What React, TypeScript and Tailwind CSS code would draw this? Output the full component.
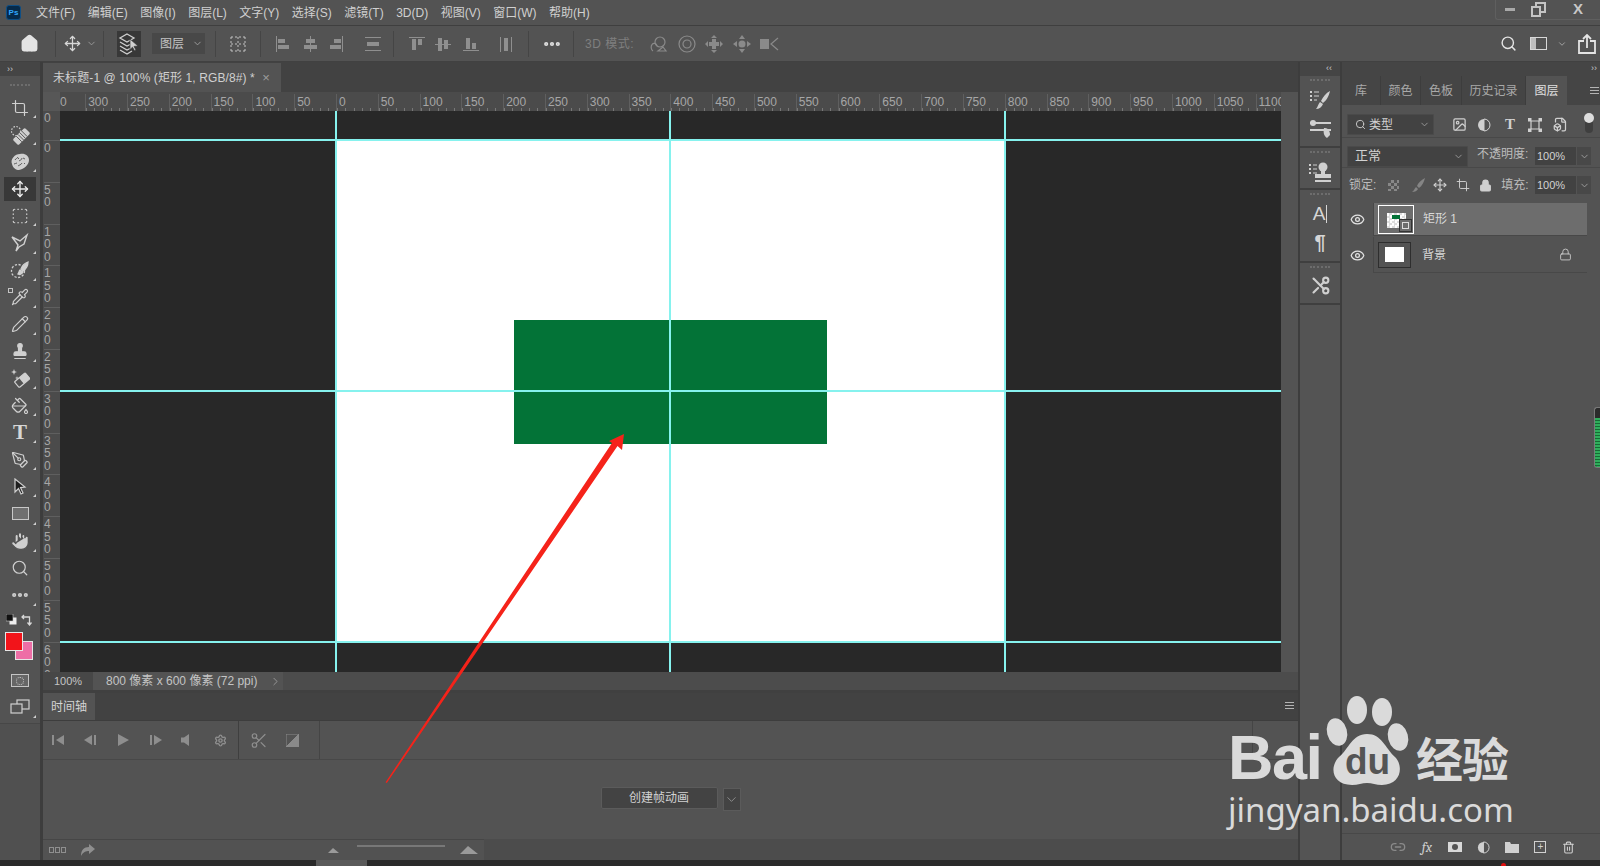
import type { ReactNode } from "react";
import {
  ChevronDown,
  ChevronRight,
  Crop,
  Ellipsis,
  Eye,
  FileBox,
  Hand,
  House,
  Image,
  Link2,
  Lock,
  Move,
  PaintBucket,
  Pencil,
  PenTool,
  Pipette,
  Scissors,
  Search,
  Settings,
  SquareDashed,
  Stamp,
  Trash2,
} from "lucide-react";

const menus = ["文件(F)", "编辑(E)", "图像(I)", "图层(L)", "文字(Y)", "选择(S)", "滤镜(T)", "3D(D)", "视图(V)", "窗口(W)", "帮助(H)"];
const rulerTop = ["300", "250", "200", "150", "100", "50", "0", "50", "100", "150", "200", "250", "300", "350", "400", "450", "500", "550", "600", "650", "700", "750", "800", "850", "900", "950", "1000", "1050", "1100"];
const rulerSide = ["0", "50", "100", "150", "200", "250", "300", "350", "400", "450", "500", "550", "600"];

const ink = "#d0d0d0";

function Sep({ left }: { left: string }) {
  return <div className={`h-[26px] w-px bg-[#454545] ${left}`} />;
}

function Slot({ className, children }: { className: string; children?: ReactNode }) {
  return <div className={`flex shrink-0 items-center justify-center ${className}`}>{children}</div>;
}

// blocks for the align buttons: bars = x,y,w,h
function Bars({ bars, size = 20 }: { bars: number[][]; size?: number }) {
  return (
    <svg width={size} height={size} viewBox="0 0 20 20" fill="#8f8f8f">
      {bars.map((b, i) => (
        <rect key={i} x={b[0]} y={b[1]} width={b[2]} height={b[3]} />
      ))}
    </svg>
  );
}

function LayersIcon() {
  return (
    <svg width="22" height="24" viewBox="0 0 22 24" fill="none" stroke={ink} strokeWidth="1.3">
      <path d="M9 2l7 4-7 4-7-4z" />
      <path d="M2 10l7 4 4-2M2 14l7 4 4-2M2 18l7 4 5-3" />
      <path d="M12 7l8 7-4 .4 2 3.6-1.500.8-2-3.600-2.500 2.400z" fill={ink} stroke="#383838" strokeWidth=".7" />
    </svg>
  );
}

function GridIcon() {
  return (
    <svg width="20" height="20" viewBox="0 0 20 20" stroke="#c4c4c4" fill="#c4c4c4" strokeDasharray="2 2">
      <path d="M3 3h14M3 10h14M3 17h14M3 3v14M10 3v14M17 3v14" fill="none" strokeWidth="1" />
    </svg>
  );
}

function HealIcon() {
  return (
    <svg width="20" height="20" viewBox="0 0 20 20" fill="none">
      <circle cx="6" cy="6" r="4.500" stroke={ink} strokeWidth="1.100" strokeDasharray="1.600 1.400" />
      <g transform="rotate(-45 11.500 11.500)">
        <rect x="3" y="7.500" width="17" height="8" rx="1.500" fill={ink} />
        <path d="M8 7.500v8M10.500 7.500v8M13 7.500v8M15.500 7.500v8" stroke="#535353" strokeWidth=".9" />
      </g>
    </svg>
  );
}

function SpongeIcon() {
  return (
    <svg width="20" height="20" viewBox="0 0 20 20" fill="none">
      <path d="M2 12c-2-5 3-10 8-10 5-1 9 2 9 6 0 5-5 9-10 10-3 0-6-2-7-6z" fill={ink} />
      <path d="M5 8c1-2 2-1 3-3M9 9c1-1 3-1 3-3M13 6l2 1M4 12c1 0 2-1 3-1M8 14c1-1 3-1 4-3M14 11l1 1M8 6l1 1" stroke="#535353" strokeWidth=".9" />
    </svg>
  );
}

function LassoIcon() {
  return (
    <svg width="20" height="20" viewBox="0 0 20 20" fill="none" stroke={ink} strokeWidth="1.4">
      <path d="M2 4l8 4 7-6-3 9-5 3-3 4 2-6z" />
    </svg>
  );
}

function BrushSelectIcon() {
  return (
    <svg width="20" height="20" viewBox="0 0 20 20" fill="none" stroke={ink} strokeWidth="1.3">
      <circle cx="8" cy="11" r="6.500" strokeDasharray="2.200 1.600" />
      <path d="M18 2c-3 1-6 4-7 7l2 2c3-2 5-5 5-9z" fill={ink} />
      <path d="M10 10l3 2c-1 2-3 3-5 2 1-1 1-3 2-4z" fill={ink} />
    </svg>
  );
}

function EraserIcon() {
  return (
    <svg width="20" height="20" viewBox="0 0 20 20" fill={ink}>
      <g transform="rotate(-40 12 12)">
        <rect x="5" y="8.500" width="14" height="7.500" rx="1" fill="none" stroke={ink} strokeWidth="1.200" />
        <rect x="11" y="8.500" width="8" height="7.500" rx="1" />
      </g>
      <path d="M4 1l.8 2.200L7 4l-2.200.8L4 7l-.8-2.200L1 4l2.200-.8zM7 8l.5 1.500L9 10l-1.500.5L7 12l-.5-1.500L5 10l1.500-.5z" />
    </svg>
  );
}

function Tool({ children, active, corner = true }: { children: ReactNode; active?: boolean; corner?: boolean }) {
  return (
    <div className="relative flex h-[27.1px] w-full shrink-0 items-center justify-center">
      <div className={`flex h-[24px] w-[32px] items-center justify-center ${active ? "bg-[#383838]" : ""}`}>{children}</div>
      {corner && !active && <span className="absolute bottom-[3px] right-[4px] h-0 w-0 border-b-[3px] border-l-[3px] border-b-[#cfcfcf] border-l-transparent" />}
    </div>
  );
}

function Grip() {
  return <div className="mx-auto h-0 w-[20px] border-t-2 border-dotted border-[#6d6d6d]" />;
}

function Toolbar() {
  const s = { size: 18, color: ink, strokeWidth: 1.6 };
  return (
    <div className="flex w-[43px] shrink-0 flex-col border-r-[3px] border-[#3d3d3d] bg-[#535353]">
      <div className="flex h-[14px] items-center bg-[#454545] pl-[7px] text-[9px] leading-none text-[#c8c8c8]">››</div>
      <div className="flex h-[18px] items-center"><Grip /></div>
      <Tool><Crop {...s} /></Tool>
      <Tool><HealIcon /></Tool>
      <Tool><SpongeIcon /></Tool>
      <Tool active corner={false}><Move size={18} color="#ececec" strokeWidth={1.8} /></Tool>
      <Tool><SquareDashed {...s} /></Tool>
      <Tool><LassoIcon /></Tool>
      <Tool><BrushSelectIcon /></Tool>
      <Tool>
        <span className="relative">
          <Pipette {...s} />
          <i className="absolute left-[-3px] top-0 h-[5px] w-[5px] border border-[#c4c4c4]" />
        </span>
      </Tool>
      <Tool><Pencil {...s} /></Tool>
      <Tool><Stamp {...s} fill={ink} /></Tool>
      <Tool><EraserIcon /></Tool>
      <Tool><PaintBucket {...s} /></Tool>
      <Tool><span className="text-[21px] font-bold leading-none text-[#d6d6d6] [font-family:'Liberation_Serif',serif]">T</span></Tool>
      <Tool><PenTool {...s} /></Tool>
      <Tool>
        <svg width="18" height="18" viewBox="0 0 18 18" fill="#1f1f1f" stroke={ink} strokeWidth="1.2"><path d="M4 1l10 8-4.500.6 2.500 5.400-2 1-2.500-5.400L4 14z" /></svg>
      </Tool>
      <Tool><div className="h-[13px] w-[17px] border border-[#c8c8c8] bg-[#6f6f6f]" /></Tool>
      <Tool><Hand {...s} fill={ink} stroke="#535353" size={20} /></Tool>
      <Tool corner={false}><Search {...s} /></Tool>
      <Tool><Ellipsis size={20} color={ink} strokeWidth={3} /></Tool>
      <div className="flex h-[18px] items-center justify-between pl-[6px] pr-[7px] pt-[4px]">
        <svg width="11" height="11" viewBox="0 0 11 11"><rect x="3.500" y="3.500" width="7" height="7" fill="#eee" /><rect width="7" height="7" fill="#111" stroke="#ccc" strokeWidth=".6" /></svg>
        <svg width="12" height="12" viewBox="0 0 12 12" fill="none" stroke="#d8d8d8" strokeWidth="1.300"><path d="M1 3h7.500v7M6.500 8.500l2 2.500 2-2.500M3 1L1 3l2 2" /></svg>
      </div>
      <div className="relative h-[39px] shrink-0">
        <div className="absolute left-[15px] top-[14px] h-[19px] w-[18px] border border-[#e6e6e6] bg-[#ee6ea6]" />
        <div className="absolute left-[5px] top-[5px] h-[19px] w-[18px] border border-[#e6e6e6] bg-[#f2141a]" />
      </div>
      <div className="mt-[2px] flex h-[26px] items-center justify-center">
        <div className="flex h-[13px] w-[18px] items-center justify-center border border-[#c4c4c4] bg-[#666]">
          <div className="h-[8px] w-[8px] rounded-full border border-dotted border-[#ccc]" />
        </div>
      </div>
      <Tool>
        <svg width="20" height="16" viewBox="0 0 20 16" fill="none" stroke={ink} strokeWidth="1.200"><rect x="7" y="1" width="12" height="9" /><rect x="1" y="5" width="11" height="9" fill="#535353" /></svg>
      </Tool>
      <div className="mt-[2px] flex-1 border-t border-[#474747] bg-[#505050]" />
    </div>
  );
}

function Rulers() {
  return (
    <div className="flex h-[19px] shrink-0 overflow-hidden bg-[#4b4b4b] pt-[2px] text-[12px] leading-[17px] text-[#a6a6a6]">
      <div className="-mt-[2px] w-[17px] shrink-0 bg-[#575757]" />
      <div className="w-[25.2px] shrink-0">0</div>
      {rulerTop.map((n, i) => (
        <div key={i} className="w-[41.8px] shrink-0 border-l border-[#5f5f5f] bg-[repeating-linear-gradient(90deg,#777_0,#777_1px,transparent_1px,transparent_8.36px)] bg-[length:100%_3px] bg-bottom bg-no-repeat pl-[2px]">
          {n}
        </div>
      ))}
    </div>
  );
}

function SideRuler() {
  return (
    <div className="w-[17px] shrink-0 overflow-hidden bg-[#4b4b4b] pl-[1px] text-left text-[12px] leading-[12.5px] text-[#a6a6a6]">
      <div className="h-[29px] pt-[1px]">0</div>
      {rulerSide.map((n) => (
        <div key={n} className="h-[41.8px] border-t border-[#5f5f5f] pt-[1px]">
          {n.split("").map((d, i) => (
            <div key={i}>{d}</div>
          ))}
        </div>
      ))}
    </div>
  );
}

function Canvas() {
  return (
    <div className="relative flex-1 overflow-hidden bg-[#282828]">
      <div className="relative ml-[275px] mt-[28px] h-[503px] w-[670px] bg-white">
        <div className="absolute left-[179px] top-[181px] h-[124px] w-[313px] bg-[#037337]" />
      </div>
      <div className="absolute bottom-0 left-[275px] top-0 w-[2px] bg-[#86f2ee]" />
      <div className="absolute bottom-0 left-[609px] top-0 w-[2px] bg-[#86f2ee]" />
      <div className="absolute bottom-0 left-[944px] top-0 w-[2px] bg-[#86f2ee]" />
      <div className="absolute left-0 right-0 top-[28px] h-[2px] bg-[#86f2ee]" />
      <div className="absolute left-0 right-0 top-[279px] h-[2px] bg-[#86f2ee]" />
      <div className="absolute left-0 right-0 top-[530px] h-[2px] bg-[#86f2ee]" />
    </div>
  );
}

function Timeline() {
  const c = "#8e8e8e";
  return (
    <div className="flex flex-1 flex-col bg-[#535353]">
      <div className="flex h-[28px] shrink-0 items-stretch justify-between border-b border-[#3d3d3d] bg-[#424242]">
        <div className="flex w-[52px] items-center justify-center bg-[#535353] text-[12px] text-[#d4d4d4]">时间轴</div>
        <div className="pr-[4px] pt-[9px]">
          <div className="h-[7px] w-[9px] border-y border-[#b4b4b4] after:mt-[2px] after:block after:h-px after:bg-[#b4b4b4]" />
        </div>
      </div>
      <div className="flex h-[39px] shrink-0 items-center border-b border-[#484848]">
        <div className="flex h-full w-[277px] items-center border-r border-[#454545]">
          <div className="flex h-full w-[196px] items-center border-r border-[#3f3f3f]">
            <Slot className="ml-[8px] w-[14px]"><svg width="12" height="10" viewBox="0 0 12 10" fill={c}><rect width="2" height="10" /><path d="M12 0v10L4 5z" /></svg></Slot>
            <Slot className="ml-[18px] w-[14px]"><svg width="12" height="10" viewBox="0 0 12 10" fill={c}><rect x="10" width="2" height="10" /><path d="M8 0v10L0 5z" /></svg></Slot>
            <Slot className="ml-[19px] w-[14px]"><svg width="11" height="12" viewBox="0 0 11 12" fill={c}><path d="M0 0l11 6-11 6z" /></svg></Slot>
            <Slot className="ml-[19px] w-[14px]"><svg width="12" height="10" viewBox="0 0 12 10" fill={c}><rect width="2" height="10" /><path d="M4 0v10l8-5z" /></svg></Slot>
            <Slot className="ml-[15px] w-[14px]"><svg width="9" height="12" viewBox="0 0 9 12" fill={c}><path d="M0 3.500h3L8 0v12L3 8.500H0z" /></svg></Slot>
            <Slot className="ml-[21px] w-[14px]"><Settings size={13} color={c} strokeWidth={2.6} /></Slot>
          </div>
          <Slot className="ml-[11px] w-[18px]"><Scissors size={19} color={c} strokeWidth={1.6} /></Slot>
          <Slot className="ml-[17px] w-[14px]">
            <svg width="13" height="13" viewBox="0 0 13 13"><rect width="13" height="13" fill="#8a8a8a" /><path d="M0 13V0h13z" fill="#535353" stroke="#8a8a8a" /></svg>
          </Slot>
        </div>
        <div className="h-full flex-1" />
        <div className="h-full w-[46px] border-l border-[#454545]" />
      </div>
      <div className="flex flex-1 items-center justify-center pb-[3px]">
        <div className="flex h-[22px] w-[117px] items-center justify-center rounded-[2px] border border-[#5b5b5b] bg-[#434343] text-[12px] text-[#d2d2d2]">创建帧动画</div>
        <div className="ml-[5px] mt-[2px] flex h-[23px] w-[18px] items-center justify-center border border-[#5b5b5b] bg-[#434343]">
          <ChevronDown size={15} color="#9a9a9a" strokeWidth={1.3} />
        </div>
      </div>
      <div className="flex h-[21px] shrink-0 bg-[#4c4c4c]">
        <div className="flex w-[441px] items-center border-t border-[#464646] bg-[#525252]">
          <div className="ml-[6px] flex gap-px">
            <i className="h-[6px] w-[5px] border border-[#8f8f8f]" />
            <i className="h-[6px] w-[5px] border border-[#8f8f8f]" />
            <i className="h-[6px] w-[5px] border border-[#8f8f8f]" />
          </div>
          <svg className="ml-[15px]" width="14" height="12" viewBox="0 0 14 12" fill="#8f8f8f"><path d="M8 0l6 5-6 5V7C5 7 2 8 0 12c0-6 3-9 8-9z" /></svg>
          <svg className="ml-[233px]" width="11" height="5" viewBox="0 0 11 5" fill="#9a9a9a"><path d="M0 5l5-5 6 5z" /></svg>
          <div className="ml-[18px] h-[2px] w-[88px] -translate-y-[4px] bg-[#787878]" />
          <svg className="ml-[15px]" width="18" height="8" viewBox="0 0 18 8" fill="#9a9a9a"><path d="M0 8l8-8 10 8z" /></svg>
        </div>
      </div>
    </div>
  );
}

function DockGroup({ className, children }: { className: string; children: ReactNode }) {
  return (
    <div className={`flex shrink-0 flex-col items-center border-b-2 border-[#3f3f3f] pt-[3px] ${className}`}>
      <Grip />
      {children}
    </div>
  );
}

function Dock() {
  return (
    <div className="flex w-[44px] shrink-0 flex-col border-x-2 border-[#3d3d3d] bg-[#535353]">
      <div className="h-[14px] bg-[#454545] pl-[26px] text-[9px] leading-[13px] text-[#c8c8c8]">‹‹</div>
      <DockGroup className="h-[72px]">
        <svg className="mt-[8px]" width="22" height="22" viewBox="0 0 22 22" fill={ink}>
          <path d="M1 2h2v2H1zM1 6h2v2H1zM1 10h2v2H1zM5 2.500h5v1H5zM5 6.500h5v1H5zM5 10.500h3v1H5z" />
          <path d="M21 2c-4 2-7 6-9 10l2 2c3-2 6-7 7-12zM11 13l3 2c-1 3-4 5-7 5 2-2 2-5 4-7z" />
        </svg>
        <svg className="mt-[8px]" width="24" height="20" viewBox="0 0 24 20" fill={ink}>
          <circle cx="5" cy="4" r="3" /><path d="M2 3h21v2H2zM2 10h21v2H2z" /><path d="M17 9c3 0 5 3 5 7l-3 3c-3-2-4-5-3-10z" />
        </svg>
      </DockGroup>
      <DockGroup className="h-[42px]">
        <svg className="mt-[8px]" width="24" height="22" viewBox="0 0 24 22" fill={ink}>
          <path d="M1 3h2v2H1zM1 7h2v2H1zM1 11h2v2H1zM5 3.500h4v1H5zM5 7.500h4v1H5zM5 11.500h4v1H5z" />
          <circle cx="15" cy="6" r="4.500" /><path d="M13 9h4v4h6v4H7v-4h6zM7 19h16v2H7z" />
        </svg>
      </DockGroup>
      <DockGroup className="h-[73px]">
        <div className="mt-[6px] flex h-[26px] items-center text-[19px] text-[#d6d6d6]">A<span className="ml-[1px] h-[18px] w-px bg-[#d6d6d6]" /></div>
        <div className="mt-[3px] text-[20px] font-bold leading-[24px] text-[#d6d6d6]">¶</div>
      </DockGroup>
      <DockGroup className="h-[42px]">
        <Scissors className="mt-[7px] -scale-x-100" size={21} color={ink} strokeWidth={2.4} />
      </DockGroup>
      <div className="flex-1 bg-[#545454]" />
    </div>
  );
}

function Field({ w, children, className = "" }: { w: string; children: ReactNode; className?: string }) {
  return (
    <div className={`flex h-[21px] shrink-0 items-center justify-between rounded-[1px] border border-[#4a4a4a] bg-[#424242] text-[#d2d2d2] ${w} ${className}`}>
      {children}
    </div>
  );
}

function ValueBox() {
  return (
    <>
      <div className="ml-auto flex h-[18px] w-[41px] shrink-0 items-center bg-[#424242] pl-[2px] text-[11px] text-[#d2d2d2]">100%</div>
      <div className="ml-px flex h-[18px] w-[14px] shrink-0 items-center justify-center bg-[#484848]"><ChevronDown size={11} color="#a0a0a0" /></div>
    </>
  );
}

function FootSlot({ children }: { children: ReactNode }) {
  return <div className="flex w-[28.4px] shrink-0 items-center justify-center">{children}</div>;
}

function LayerPanel() {
  const tabs = [
    ["库", "w-[39px]"],
    ["颜色", "w-[40px]"],
    ["色板", "w-[41px]"],
    ["历史记录", "w-[64px]"],
  ];
  return (
    <div className="flex min-w-0 flex-1 flex-col bg-[#535353]">
      <div className="flex h-[14px] items-center justify-end bg-[#454545] pr-[3px] text-[9px] text-[#c8c8c8]">››</div>
      <div className="flex h-[29px] shrink-0 bg-[#454545]">
        {tabs.map(([t, w]) => (
          <div key={t} className={`flex items-center justify-center border-r border-[#3d3d3d] text-[12px] text-[#a9a9a9] ${w}`}>{t}</div>
        ))}
        <div className="flex w-[41px] items-center justify-center bg-[#535353] text-[12px] text-[#e0e0e0]">图层</div>
        <div className="ml-auto pt-[11px]">
          <div className="mr-[1px] h-[7px] w-[9px] border-y border-[#b4b4b4] after:mt-[2px] after:block after:h-px after:bg-[#b4b4b4]" />
        </div>
      </div>
      <div className="flex h-[33px] shrink-0 items-center border-b border-[#484848] pl-[5px] pt-[7px]">
        <Field w="w-[87px]" className="pl-[7px] pr-[3px] text-[12px]">
          <span className="flex items-center gap-[3px]"><Search size={11} color="#d0d0d0" />类型</span>
          <ChevronDown size={11} color="#9a9a9a" />
        </Field>
        <Image className="ml-[18px]" size={15} color={ink} />
        <svg className="ml-[10px]" width="14" height="14" viewBox="0 0 14 14"><circle cx="7" cy="7" r="6" fill={ink} /><path d="M7 1a6 6 0 0 1 0 12z" fill="#535353" stroke={ink} /></svg>
        <span className="ml-[12px] w-[14px] text-center text-[15px] font-bold leading-none text-[#d0d0d0] [font-family:'Liberation_Serif',serif]">T</span>
        <svg className="ml-[11px]" width="14" height="14" viewBox="0 0 14 14" fill={ink}>
          <path d="M3 3h8v8H3z" fill="none" stroke={ink} strokeWidth="1.200" /><rect width="3.500" height="3.500" /><rect x="10.500" width="3.500" height="3.500" /><rect y="10.500" width="3.500" height="3.500" /><rect x="10.500" y="10.500" width="3.500" height="3.500" />
        </svg>
        <FileBox className="ml-[11px]" size={15} color={ink} />
        <div className="relative ml-[17px] h-[17px] w-[8px] rounded-full bg-[#3f3f3f]">
          <div className="absolute left-[-1px] top-[-3px] h-[10px] w-[10px] rounded-full bg-[#dedede]" />
        </div>
      </div>
      <div className="flex h-[30px] shrink-0 items-center border-b border-[#484848] pl-[5px] pr-[9px] pt-[7px]">
        <Field w="w-[121px]" className="pl-[7px] pr-[3px] text-[13px]">
          正常
          <ChevronDown size={11} color="#9a9a9a" />
        </Field>
        <span className="ml-[9px] -translate-y-[2px] text-[12px] text-[#bdbdbd]">不透明度:</span>
        <ValueBox />
      </div>
      <div className="flex h-[34px] shrink-0 items-center pl-[7px] pr-[9px] text-[12px] text-[#bdbdbd]">
        <span>锁定:</span>
        <div className="ml-[12px] h-[11px] w-[11px] bg-[conic-gradient(#888_25%,#555_0_50%,#888_0_75%,#555_0)] bg-[length:6px_6px]" />
        <svg className="ml-[12px]" width="14" height="14" viewBox="0 0 14 14" fill="#858585"><path d="M14 0C10 2 7 5 6 8l2 2c3-2 5-6 6-10zM5 9l2 2c-1 2-3 3-6 3 2-1 2-3 4-5z" /></svg>
        <Move className="ml-[8px]" size={14} color={ink} strokeWidth={2} />
        <Crop className="ml-[9px]" size={14} color={ink} strokeWidth={1.6} />
        <Lock className="ml-[9px]" size={13} color={ink} fill={ink} />
        <span className="ml-[9px]">填充:</span>
        <ValueBox />
      </div>
      <div className="flex h-[35px] shrink-0 items-center pr-[13px]">
        <Slot className="w-[31px]"><Eye size={15} color="#e4e4e4" strokeWidth={2} /></Slot>
        <div className="flex h-[33px] flex-1 items-center border-b border-l border-[#484848] bg-[#6d6d6d]">
          <div className="relative ml-[4px] h-[29px] w-[36px] border border-white">
            <div className="absolute left-[8px] top-[7px] h-[15px] w-[19px] bg-[repeating-conic-gradient(#ddd_0_25%,#fff_0_50%)] bg-[length:5px_5px]" />
            <div className="absolute left-[13px] top-[9px] h-[4px] w-[8px] bg-[#037337]" />
            <div className="absolute bottom-[1px] right-[1px] h-[13px] w-[13px] border border-[#333] bg-[#6d6d6d]">
              <div className="m-[2px] h-[7px] w-[7px] border border-[#ddd]" />
            </div>
          </div>
          <span className="ml-[9px] text-[12px] text-[#d8d8d8]">矩形 1</span>
        </div>
      </div>
      <div className="flex h-[36px] shrink-0 items-center pr-[13px]">
        <Slot className="w-[31px]"><Eye size={15} color="#e4e4e4" strokeWidth={2} /></Slot>
        <div className="flex h-[36px] flex-1 items-center border-b border-l border-[#484848]">
          <div className="ml-[4px] flex h-[26px] w-[33px] items-center justify-center border border-[#2e2e2e]">
            <div className="h-[15px] w-[19px] bg-white" />
          </div>
          <span className="ml-[11px] text-[12px] text-[#d8d8d8]">背景</span>
          <Lock className="ml-auto mr-[15px]" size={13} color={ink} strokeWidth={1.6} />
        </div>
      </div>
      <div className="flex-1" />
      <div className="flex h-[27px] shrink-0 items-center justify-end border-t border-[#484848] pr-[17px]">
        <FootSlot><Link2 size={16} color="#8a8a8a" /></FootSlot>
        <FootSlot><span className="font-serif text-[14px] italic text-[#cfcfcf]">fx</span></FootSlot>
        <FootSlot><div className="flex h-[10px] w-[14px] items-center justify-center bg-[#d8d8d8]"><i className="h-[6px] w-[6px] rounded-full bg-[#535353]" /></div></FootSlot>
        <FootSlot><svg width="13" height="13" viewBox="0 0 14 14"><circle cx="7" cy="7" r="6" fill={ink} /><path d="M7 1a6 6 0 0 1 0 12z" fill="#535353" stroke={ink} /></svg></FootSlot>
        <FootSlot><svg width="14" height="11" viewBox="0 0 14 11" fill={ink}><path d="M0 0h5l1 2h8v9H0z" /></svg></FootSlot>
        <FootSlot><div className="flex h-[12px] w-[12px] items-center justify-center border border-[#d0d0d0] text-[10px] leading-none text-[#d0d0d0]">+</div></FootSlot>
        <FootSlot><Trash2 size={13} color={ink} /></FootSlot>
      </div>
    </div>
  );
}

function Watermark() {
  return (
    <div className="pointer-events-none absolute left-[1228px] top-[696px] w-[290px] text-[#dadada]">
      <div className="flex h-[92px] items-end">
        <span className="w-[94px] shrink-0 translate-y-[7px] text-[63px] font-bold leading-[75px] tracking-[-1.5px]">Bai</span>
        <div className="relative ml-[1px] h-[92px] w-[90px] shrink-0">
          <svg className="absolute inset-0" width="90" height="92" viewBox="0 0 90 92" fill="#dadada">
            <ellipse cx="34" cy="14" rx="10" ry="14" />
            <ellipse cx="59" cy="16" rx="10" ry="14" />
            <ellipse cx="14" cy="36" rx="10" ry="14" transform="rotate(-15 14 36)" />
            <ellipse cx="75" cy="41" rx="10" ry="14" transform="rotate(-15 75 41)" />
            <path d="M44 38c15 0 18 14 28 23 9 9 6 28-13 28-6 0-10-2-15-2s-9 2-15 2C9 89 6 71 16 61c10-8 13-23 28-23z" />
          </svg>
          <span className="absolute left-[22px] top-[46px] text-[37px] font-bold leading-[40px] text-[#555]">du</span>
        </div>
        <span className="ml-[3px] -translate-y-[1px] text-[47px] font-bold leading-[60px] tracking-[-1px] [font-family:'Noto_Sans_CJK_SC',sans-serif]">经验</span>
      </div>
      <div className="mt-[1px] whitespace-nowrap text-[33px] leading-[42px] [font-family:'Noto_Sans',sans-serif]">jingyan.baidu.com</div>
    </div>
  );
}

export default function App() {
  return (
    <div className="relative flex h-[866px] w-[1600px] flex-col overflow-hidden bg-[#535353] [font-family:'Liberation_Sans','Noto_Sans_CJK_SC',sans-serif]">
      {/* menu */}
      <div className="flex h-[26px] shrink-0 items-center border-b border-[#3f3f3f] pl-[6px]">
        <div className="flex h-[15px] w-[15px] items-center justify-center rounded-[3px] border border-[#0e4f86] bg-[#062a4a] text-[8px] font-bold text-[#31a8ff]">Ps</div>
        <div className="ml-[15px] flex gap-[12.5px] text-[12px] text-[#d0d0d0]">
          {menus.map((m) => (
            <span key={m}>{m}</span>
          ))}
        </div>
        <div className="ml-auto mb-[5px] flex h-[20px] w-[105px] items-center rounded-bl-[3px] border-b border-l border-[#5f5f5f] pl-[9px]">
          <div className="h-[3px] w-[10px] bg-[#a9a9a9]" />
          <svg className="ml-[16px]" width="16" height="15" viewBox="0 0 16 15" fill="none" stroke="#c4c4c4" strokeWidth="2"><rect x="1" y="5" width="8" height="9" /><path d="M5 4V1h9v9h-4" /></svg>
          <span className="ml-[26px] text-[15px] font-bold text-[#c8c8c8]">X</span>
        </div>
      </div>
      {/* options */}
      <div className="flex h-[36px] shrink-0 items-center border-b border-[#414141] bg-[#535353]">
        <Slot className="ml-[20px] w-[19px]"><House size={19} color="#e4e4e4" fill="#e4e4e4" /></Slot>
        <Sep left="ml-[16px]" />
        <Slot className="ml-[7px] w-[18px]"><Move size={17} color="#d8d8d8" strokeWidth={1.8} /></Slot>
        <Slot className="ml-[4px] w-[12px]"><ChevronDown size={11} color="#9a9a9a" /></Slot>
        <Sep left="ml-[6px]" />
        <Slot className="ml-[13px] h-[26px] w-[24px] bg-[#383838]"><LayersIcon /></Slot>
        <div className="ml-[11px] flex h-[21px] w-[53px] items-center justify-between bg-[#484848] pl-[8px] pr-[2px] text-[12px] text-[#c4c4c4]">
          图层
          <ChevronDown size={11} color="#a0a0a0" />
        </div>
        <Sep left="ml-[10px]" />
        <Slot className="ml-[12px] w-[20px]"><GridIcon /></Slot>
        <Sep left="ml-[12px]" />
        <Slot className="ml-[12px] w-[20px]"><Bars bars={[[3, 2, 1, 16], [5, 5, 7, 4], [5, 11, 11, 4]]} /></Slot>
        <Slot className="ml-[7px] w-[20px]"><Bars bars={[[10, 2, 1, 16], [6, 5, 9, 4], [4, 11, 13, 4]]} /></Slot>
        <Slot className="ml-[6px] w-[20px]"><Bars bars={[[16, 2, 1, 16], [8, 5, 7, 4], [4, 11, 11, 4]]} /></Slot>
        <Slot className="ml-[17px] w-[20px]"><Bars bars={[[2, 3, 16, 1], [2, 16, 16, 1], [4, 8, 12, 4]]} /></Slot>
        <Sep left="ml-[10px]" />
        <Slot className="ml-[13px] w-[20px]"><Bars bars={[[2, 3, 16, 1], [5, 5, 4, 11], [11, 5, 4, 6]]} /></Slot>
        <Slot className="ml-[6px] w-[20px]"><Bars bars={[[2, 10, 16, 1], [5, 4, 4, 13], [11, 6, 4, 9]]} /></Slot>
        <Slot className="ml-[8px] w-[20px]"><Bars bars={[[2, 16, 16, 1], [5, 4, 4, 11], [11, 9, 4, 6]]} /></Slot>
        <Slot className="ml-[15px] w-[20px]"><Bars bars={[[4, 3, 1, 15], [15, 3, 1, 15], [8, 4, 4, 13]]} /></Slot>
        <Sep left="ml-[12px]" />
        <Slot className="ml-[13px] w-[20px]"><Ellipsis size={20} color="#e0e0e0" strokeWidth={3} /></Slot>
        <Sep left="ml-[11px]" />
        <span className="ml-[11px] w-[50px] text-[12px] tracking-[0.5px] text-[#7f7f7f]">3D 模式:</span>
        <div className="ml-[15px] flex items-center gap-[9.5px] text-[#8a8a8a]">
          <svg width="18" height="18" viewBox="0 0 18 18" fill="none" stroke="#8a8a8a" strokeWidth="1.200"><circle cx="10" cy="7" r="5" /><path d="M3 16a3 4 0 1 1 4-5M8 16h8l-3-4z" /></svg>
          <svg width="18" height="18" viewBox="0 0 18 18" fill="none" stroke="#8a8a8a" strokeWidth="1.200"><circle cx="9" cy="9" r="8" /><circle cx="9" cy="9" r="4" /></svg>
          <svg width="18" height="18" viewBox="0 0 18 18" fill="#8a8a8a"><path d="M9 0l3 3H6zM9 18l-3-3h6zM0 9l3-3v6zM18 9l-3 3V6z" /><rect x="7" y="4" width="4" height="10" /><rect x="4" y="7" width="10" height="4" /></svg>
          <svg width="18" height="18" viewBox="0 0 18 18" fill="#8a8a8a"><circle cx="9" cy="9" r="3.500" /><path d="M9 0l3 4H6zM9 18l-3-4h6zM0 9l4-3v6zM18 9l-4 3V6z" /></svg>
          <svg width="20" height="14" viewBox="0 0 20 14" fill="#8a8a8a"><rect y="2" width="9" height="10" /><path d="M18 1l-7 6 7 6" fill="none" stroke="#8a8a8a" strokeWidth="1.200" /></svg>
        </div>
        <Slot className="ml-auto w-[18px]"><Search size={17} color="#e4e4e4" strokeWidth={2} /></Slot>
        <div className="ml-[13px] flex h-[13px] w-[17px] border border-[#d8d8d8]"><i className="w-[5px] bg-[#bdbdbd]" /></div>
        <Slot className="ml-[9px] w-[12px]"><ChevronDown size={10} color="#b0b0b0" /></Slot>
        <svg className="ml-[10px] mr-[4px]" width="18" height="20" viewBox="0 0 18 20" fill="none" stroke="#e4e4e4" strokeWidth="1.800"><path d="M6 7H1v12h16V7h-5M9 14V1M5 5l4-4 4 4" /></svg>
      </div>
      {/* body */}
      <div className="flex min-h-0 flex-1">
        <Toolbar />
        <div className="flex w-[1255px] shrink-0 flex-col">
          <div className="flex h-[30px] shrink-0 items-end bg-[#424242]">
            <div className="flex h-[29px] w-[238px] items-center justify-between bg-[#535353] pl-[10px] pr-[11px] text-[12px] tracking-[0.1px] text-[#d0d0d0]">
              未标题-1 @ 100% (矩形 1, RGB/8#) *
              <span className="text-[13px] text-[#9c9c9c]">×</span>
            </div>
          </div>
          <div className="flex h-[580px] shrink-0 pr-[17px]">
            <div className="flex min-w-0 flex-1 flex-col">
              <Rulers />
              <div className="flex min-h-0 flex-1">
                <SideRuler />
                <Canvas />
              </div>
            </div>
          </div>
          <div className="flex h-[18px] shrink-0 items-stretch bg-[#4c4c4c] text-[12px] text-[#c4c4c4]">
            <div className="flex w-[50px] items-center bg-[#474747] pl-[11px] text-[11px]">100%</div>
            <div className="flex w-[190px] items-center justify-between bg-[#535353] pl-[13px] pr-[1px]">
              800 像素 x 600 像素 (72 ppi)
              <ChevronRight size={13} color="#a8a8a8" strokeWidth={1.400} />
            </div>
          </div>
          <div className="h-[3px] shrink-0 bg-[#404040]" />
          <Timeline />
        </div>
        <Dock />
        <LayerPanel />
      </div>
      <div className="flex h-[6px] shrink-0 bg-[#2a2a2a]">
        <div className="ml-[316px] h-full w-[51px] bg-[#5a5a5a]" />
        <div className="ml-[1134px] mt-[3px] h-[3px] w-[5px] rounded-t-full bg-[#e01010]" />
      </div>
      {/* annotation arrow drawn over the screenshot */}
      <svg className="pointer-events-none absolute left-0 top-0" width="1600" height="866" viewBox="0 0 1600 866">
        <path d="M624 434 L622 450 L617.500 446 L386.800 783 L385.600 782.200 L612 443 L609 441 Z" fill="#f5231a" />
      </svg>
      {/* scrollbar thumb poking in at the right edge */}
      <div className="absolute left-[1594px] top-[407px] h-[61px] w-[6px] overflow-hidden rounded-l-[3px] border border-r-0 border-[#7a7a7a] bg-[#2b2b2b]">
        <div className="mt-[10px] h-full bg-[repeating-linear-gradient(0deg,#2fae5c_0,#2fae5c_2px,#176b35_2px,#176b35_3px)]" />
      </div>
      <Watermark />
    </div>
  );
}
